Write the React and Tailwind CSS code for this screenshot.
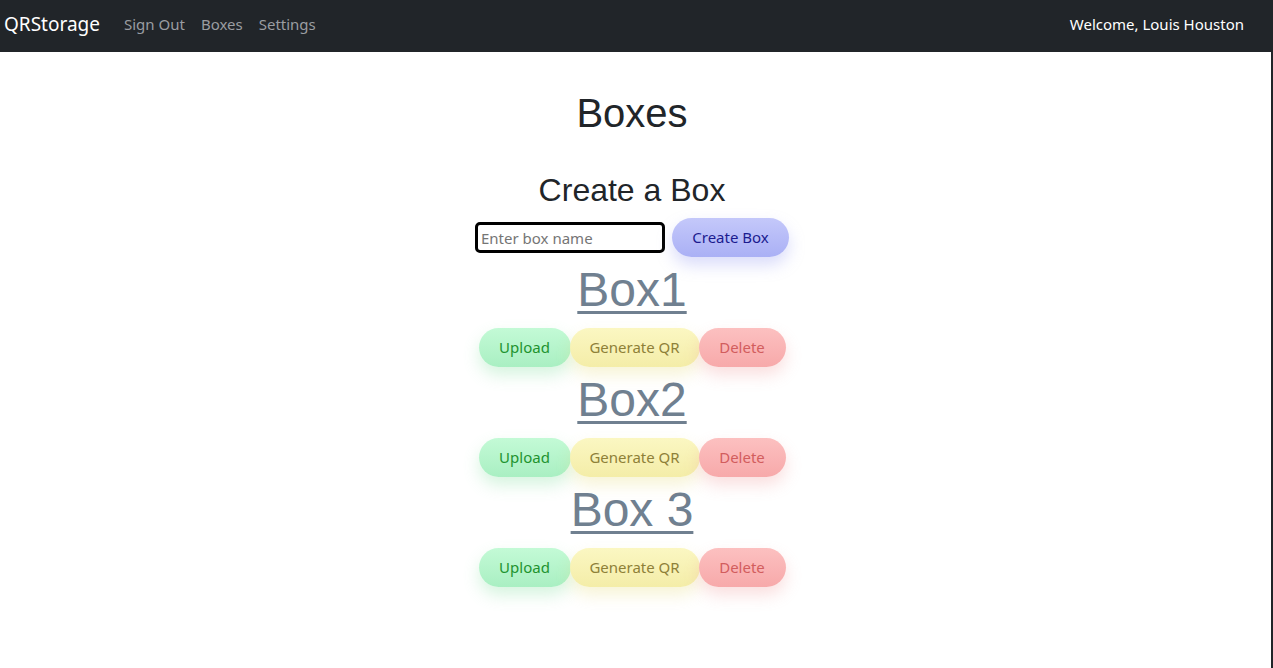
import { useState } from 'react';

const UI_FONT = "font-['Segoe_UI','Noto_Sans',sans-serif]";
const HEAD_FONT = "font-['Liberation_Sans',Arial,sans-serif]";

const BOXES = [
  { id: 1, name: 'Box1' },
  { id: 2, name: 'Box2' },
  { id: 3, name: 'Box 3' },
];

function NavBar() {
  return (
    <nav className={`flex h-[52px] items-center justify-between bg-[#212529] pb-[4px] pl-[4px] pr-[27px] ${UI_FONT}`}>
      <div className="flex items-center">
        <a href="#" className="mr-[24px] text-[19px] text-white">QRStorage</a>
        <div className="flex items-center gap-[16px] text-[15px] text-[#9a9da1]">
          <a href="#">Sign Out</a>
          <a href="#">Boxes</a>
          <a href="#">Settings</a>
        </div>
      </div>
      <span className="text-[15px] text-white">Welcome, Louis Houston</span>
    </nav>
  );
}

function BoxItem({ box }) {
  return (
    <div className="flex flex-col items-center pb-[4px]">
      <a href="#" className={`text-[48px] leading-[58px] text-[#708090] underline decoration-[3px] underline-offset-[5px] ${HEAD_FONT}`}>
        {box.name}
      </a>
      <div className={`mt-[9px] flex text-[15px] ${UI_FONT}`}>
        <button className="h-[39px] w-[92px] rounded-full bg-gradient-to-b from-[#c3fad6] to-[#a9efc2] text-[#21932f] shadow-[0_8px_16px_rgba(120,220,150,0.3)]">
          Upload
        </button>
        <button className="-ml-[1px] h-[39px] w-[130px] rounded-full bg-gradient-to-b from-[#fbf7c2] to-[#f4eda8] text-[#8e8038] shadow-[0_8px_16px_rgba(230,220,120,0.3)]">
          Generate QR
        </button>
        <button className="-ml-[1px] h-[39px] w-[87px] rounded-full bg-gradient-to-b from-[#fcc0c0] to-[#f7a9aa] text-[#d25d5d] shadow-[0_8px_16px_rgba(240,150,150,0.3)]">
          Delete
        </button>
      </div>
    </div>
  );
}

export default function App() {
  const [name, setName] = useState('');

  return (
    <div className="flex min-h-[668px] bg-white">
      <div className="flex-1">
        <NavBar />
        <main className="flex flex-col items-center pr-[7px] pt-[37px] text-[#212529]">
          <h1 className={`text-[40px] leading-[48px] ${HEAD_FONT}`}>Boxes</h1>
          <h2 className={`mt-[34px] text-[32px] leading-[38px] ${HEAD_FONT}`}>Create a Box</h2>
          <div className="mt-[9px] flex items-center gap-[7px]">
            <input
              value={name}
              onChange={(e) => setName(e.target.value)}
              placeholder="Enter box name"
              className={`h-[31px] w-[190px] rounded-[5px] border-[3px] border-black px-[3px] text-[15px] text-black placeholder:text-[#757575] outline-none ${UI_FONT}`}
            />
            <button className={`h-[39px] w-[117px] rounded-full bg-gradient-to-b from-[#c4c8fa] to-[#aab0f5] text-[15px] text-[#1b1b8f] shadow-[0_8px_16px_rgba(150,155,240,0.35)] ${UI_FONT}`}>
              Create Box
            </button>
          </div>
          <div className="mt-[4px] flex flex-col items-center">
            {BOXES.map((b) => (
              <BoxItem key={b.id} box={b} />
            ))}
          </div>
        </main>
      </div>
      <div className="w-[2px] bg-[#212529]" />
    </div>
  );
}
